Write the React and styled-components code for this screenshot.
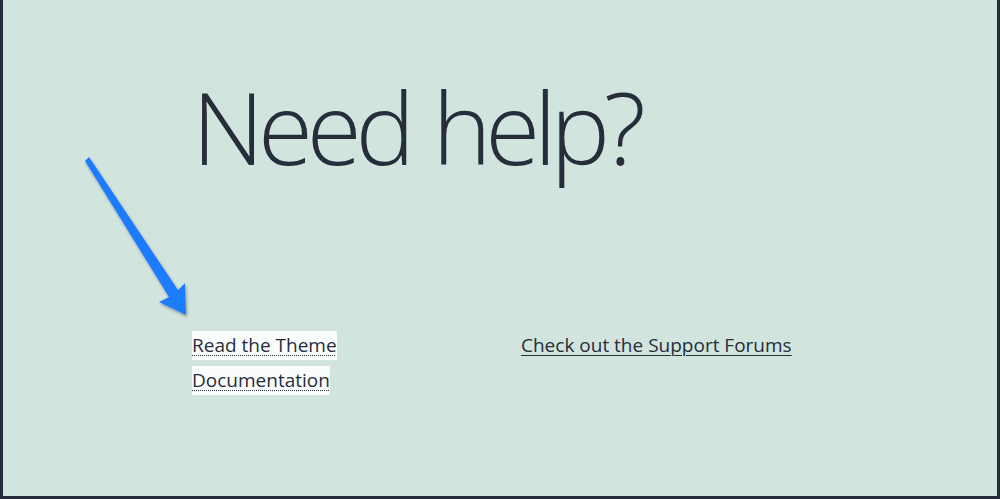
import React from "react";
import styled, { createGlobalStyle } from "styled-components";

const GlobalStyle = createGlobalStyle`
  html, body {
    margin: 0;
    padding: 0;
  }
  body {
    font-family: "Open Sans", "Noto Sans", sans-serif;
  }
`;

const Frame = styled.div`
  position: relative;
  box-sizing: border-box;
  width: 1000px;
  height: 499px;
  background: #d2e4de;
  border-left: 3px solid #252c3a;
  border-right: 3px solid #252c3a;
  border-bottom: 3px solid #252c3a;
  color: #262d3b;
  overflow: hidden;
`;

const Content = styled.div`
  padding: 66px 0 0 189px;
  display: flex;
  flex-direction: column;
  gap: 142px;
`;

const Heading = styled.h1`
  margin: 0;
  font-family: "Open Sans", sans-serif;
  font-weight: 300;
  font-size: 100px;
  line-height: 1.2;
  letter-spacing: -6.2px;
  word-spacing: 4px;
`;

const LinkRow = styled.div`
  display: grid;
  grid-template-columns: 200px 300px;
  column-gap: 129px;
`;

const HelpLink = styled.a`
  font-family: "Open Sans", sans-serif;
  font-size: 19px;
  line-height: 35px;
  color: #262d3b;
  text-decoration: underline;
  text-decoration-style: ${(p) => (p.$dotted ? "dotted" : "solid")};
  text-underline-offset: 3px;
  text-decoration-thickness: 1px;
  background: ${(p) => (p.$highlight ? "#fbfdfc" : "transparent")};
  padding: 1px 0 2px;
`;

const Arrow = styled.svg`
  position: absolute;
  left: 0;
  top: 0;
  pointer-events: none;
`;

function PointerArrow() {
  return (
    <Arrow width="1000" height="499" viewBox="0 0 1000 499">
      <defs>
        <filter id="sh" x="-20%" y="-20%" width="140%" height="140%">
          <feDropShadow dx="1" dy="2" stdDeviation="1.5" floodColor="#000" floodOpacity="0.35" />
        </filter>
      </defs>
      <polygon
        points="82,161 86,157 175,290 182,283 183,315 156,302 166,297"
        fill="#1f7bfd"
        filter="url(#sh)"
      />
    </Arrow>
  );
}

export default function App() {
  return (
    <>
      <GlobalStyle />
      <Frame>
        <Content>
          <Heading>Need help?</Heading>
          <LinkRow>
            <div>
              <HelpLink href="#" $dotted $highlight>
                Read the Theme Documentation
              </HelpLink>
            </div>
            <div>
              <HelpLink href="#">Check out the Support Forums</HelpLink>
            </div>
          </LinkRow>
        </Content>
        <PointerArrow />
      </Frame>
    </>
  );
}
